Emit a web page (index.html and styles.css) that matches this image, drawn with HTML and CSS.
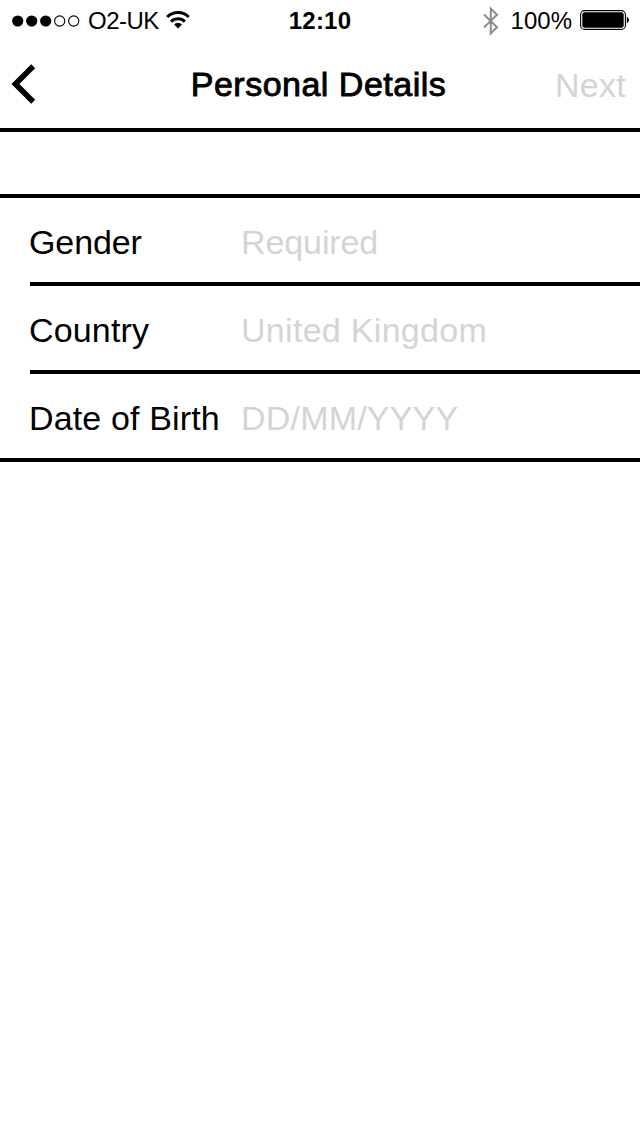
FILE: index.html
```html
<!DOCTYPE html>
<html lang="en">
<head>
<meta charset="utf-8">
<title>Personal Details</title>
<link rel="stylesheet" href="styles.css">
</head>
<body>
<header class="status">
  <div class="status-left">
    <svg class="signal" width="68" height="12" viewBox="0 0 68 12"><g fill="#000"><circle cx="5.7" cy="6" r="5.6"/><circle cx="19.7" cy="6" r="5.6"/><circle cx="33.7" cy="6" r="5.6"/></g><g fill="none" stroke="#000" stroke-width="1.1"><circle cx="47.7" cy="6" r="5.1"/><circle cx="61.7" cy="6" r="5.1"/></g></svg>
    <span class="carrier">O2-UK</span>
    <svg class="wifi" width="24" height="18" viewBox="0 0 24 18"><g fill="none" stroke="#000" stroke-width="3"><path d="M1.2 6a15.5 15.5 0 0 1 21.6 0"/><path d="M5.1 10.6a10 10 0 0 1 13.8 0"/></g><path d="M8 13.5a5.5 5.5 0 0 1 8 0L12 17.6z"/></svg>
  </div>
  <span class="clock">12:10</span>
  <div class="status-right">
    <svg class="bluetooth" width="16" height="30" viewBox="0 0 16 30"><path d="M1 8.5 14 21.2 7.8 27.4V2.6L14 8.8 1 21.5" fill="none" stroke="#8c8c8c" stroke-width="2"/></svg>
    <span class="percent">100%</span>
    <svg class="battery" width="50" height="20" viewBox="0 0 50 20"><rect x=".6" y=".6" width="44.8" height="18.8" rx="4" fill="none" stroke="#000" stroke-width="1.1"/><rect x="2.3" y="2.3" width="41.4" height="15.4" rx="2.5"/><path d="M46.8 6.5q2.2 1.1 2.2 3.5t-2.2 3.5z"/></svg>
  </div>
</header>
<nav class="navbar">
  <svg class="back" width="26" height="40" viewBox="0 0 26 40"><path d="M22.2 2.2 4.4 20 22.2 37.8" fill="none" stroke="#000" stroke-width="5.6"/></svg>
  <h1 class="title">Personal Details</h1>
  <span class="next">Next</span>
</nav>
<main class="form">
  <div class="row"><span class="label gender">Gender</span><span class="value required">Required</span></div>
  <div class="row"><span class="label country">Country</span><span class="value kingdom">United Kingdom</span></div>
  <div class="row"><span class="label birth">Date of Birth</span><span class="value date">DD/MM/YYYY</span></div>
</main>
</body>
</html>
```
FILE: styles.css
```css
* { box-sizing: border-box; }
body { margin: 0; width: 640px; height: 1136px; background: #fff; color: #000; font-family: "Liberation Sans", Arial, sans-serif; font-size: 34px; line-height: 40px; overflow: hidden; white-space: nowrap; }
svg { display: block; flex: none; }
.status { display: grid; grid-template-columns: 1fr auto 1fr; align-items: center; height: 40px; padding: 0 10px 0 12px; font-size: 24px; line-height: 38px; }
.status-left, .status-right { display: flex; align-items: center; height: 40px; }
.status-left, .clock, .percent { padding-top: 2px; }
.status-right { justify-content: flex-end; }
.carrier { margin-left: 8px; width: 72px; letter-spacing: -0.5px; }
.wifi { margin-left: 6px; margin-top: -2px; }
.clock { padding-right: 2px; font-weight: bold; letter-spacing: 0.2px; }
.bluetooth { margin-right: 12px; margin-top: 1px; }
.percent { margin-right: 8px; }
.navbar { display: grid; grid-template-columns: 1fr auto 1fr; align-items: center; height: 92px; padding: 0 14px 0 11px; border-bottom: 4px solid #000; }
.title { margin: 0; font-size: 34px; font-weight: normal; letter-spacing: 0.5px; -webkit-text-stroke: 0.9px #000; }
.next { justify-self: end; padding-top: 2px; color: #d4d4d4; letter-spacing: 0.3px; }
.form { margin-top: 62px; border-top: 4px solid #000; border-bottom: 4px solid #000; }
.row { display: flex; align-items: center; margin-left: 30px; height: 88px; padding-top: 4px; border-bottom: 4px solid #000; }
.row:last-child { height: 84px; border-bottom: 0; }
.label { width: 212px; margin-left: -1px; }
.value { color: #d4d4d6; }
.gender, .required { letter-spacing: -0.1px; }
.country, .birth { letter-spacing: 0.15px; }
.kingdom { letter-spacing: 0.3px; }
.date { letter-spacing: 0.2px; }
```
